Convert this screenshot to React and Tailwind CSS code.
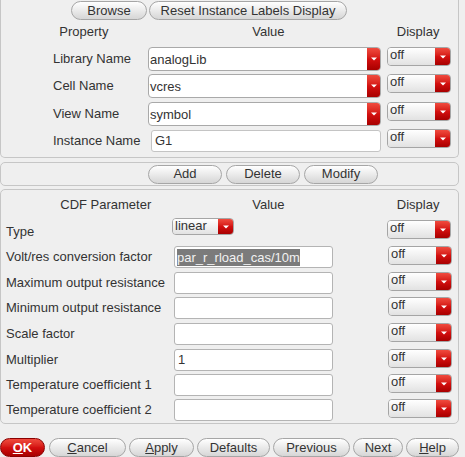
import React from "react"

// small red dropdown cap with a white arrow
const Cap = ({ w = "w-[14px]" }) => (
  <div className={`${w} h-full flex items-center justify-center bg-gradient-to-b from-[#f04a3e] via-[#d41010] to-[#a80000]`}>
    <svg width="6" height="4" viewBox="0 0 6 4">
      <polygon points="0,0.5 6,0.5 3,3.5" fill="#fff" />
    </svg>
  </div>
)

const ValueCombo = ({ value }) => (
  <div className="w-[233px] h-[24px] flex rounded-[4px] border border-[#a9a9a9] overflow-hidden bg-white">
    <div className="flex-1 flex items-center pl-[1px] pt-[1px]">{value}</div>
    <Cap w="w-[13px]" />
  </div>
)

const DisplayCombo = ({ h = "h-[19px]" }) => (
  <div className={`w-[64px] ${h} flex rounded-[4px] border border-[#a5a5a5] overflow-hidden`}>
    <div className="flex-1 bg-gradient-to-b from-white to-[#e2e2e2] pl-[2px] leading-[14px]">off</div>
    <Cap w="w-[15px]" />
  </div>
)

const Button = ({ w, children, className = "" }) => (
  <div
    className={`${w} h-[19px] flex items-center justify-center rounded-full border border-[#a6a6a6] bg-gradient-to-b from-white to-[#d6d6d6] text-[#333] ${className}`}
  >
    {children}
  </div>
)

const Field = ({ children }) => (
  <div className="w-[159px] h-[22px] flex items-center rounded-[3px] border border-[#b4b4b4] bg-white pl-[3px]">
    {children}
  </div>
)

const params = [
  { label: "Volt/res conversion factor", h: "h-[26px]", selected: "par_r_rload_cas/10m" },
  { label: "Maximum output resistance", h: "h-[25px]" },
  { label: "Minimum output resistance", h: "h-[26px]" },
  { label: "Scale factor", h: "h-[26px]" },
  { label: "Multiplier", h: "h-[25px]", value: "1" },
  { label: "Temperature coefficient 1", h: "h-[25px]" },
  { label: "Temperature coefficient 2", h: "h-[24px]" },
]

export default function App() {
  return (
    <div className="w-[465px] h-[457px] overflow-hidden bg-[#efefef] text-[13px] text-[#333] font-['Liberation_Sans',Arial,sans-serif]">
      {/* Property panel */}
      <div className="w-[459px] h-[158px] border border-t-0 border-[#c6c6c6] rounded-b-[5px]">
        <div className="flex gap-[2px] pl-[70px] pt-[1px]">
          <Button w="w-[76px]">Browse</Button>
          <Button w="w-[198px]">Reset Instance Labels Display</Button>
        </div>
        <div className="flex mt-[4px] h-[15px] leading-[15px]">
          <div className="w-[166px] text-center">Property</div>
          <div className="w-[204px] text-center">Value</div>
          <div className="w-[8px]" />
          <div className="w-[80px] text-center">Display</div>
        </div>
        <div className="mt-[8px]">
          {[
            ["Library Name", "analogLib", "h-[27px]"],
            ["Cell Name", "vcres", "h-[28px]"],
            ["View Name", "symbol", "h-[28px]"],
          ].map(([label, value, h]) => (
            <div key={label} className={`flex items-start ${h}`}>
              <div className="w-[147px] h-[24px] pl-[52px] flex items-center">{label}</div>
              <ValueCombo value={value} />
              <div className="ml-[6px]">
                <DisplayCombo />
              </div>
            </div>
          ))}
          <div className="flex items-start">
            <div className="w-[150px] h-[22px] pl-[52px] flex items-center">Instance Name</div>
            <div className="w-[230px] h-[22px] flex items-center rounded-[3px] border border-[#c4c4c4] bg-white pl-[3px]">
              G1
            </div>
            <div className="ml-[6px] -mt-[1px]">
              <DisplayCombo />
            </div>
          </div>
        </div>
      </div>

      {/* Add / Delete / Modify */}
      <div className="w-[459px] h-[24px] mt-[4px] border border-[#c6c6c6] rounded-[5px] flex items-center pl-[147px] gap-[4px]">
        <Button w="w-[74px]">Add</Button>
        <Button w="w-[74px]">Delete</Button>
        <Button w="w-[74px]">Modify</Button>
      </div>

      {/* CDF parameters */}
      <div className="w-[459px] h-[235px] mt-[3px] border border-[#c6c6c6] rounded-[5px]">
        <div className="flex mt-[7px] h-[15px] leading-[15px]">
          <div className="w-[210px] text-center">CDF Parameter</div>
          <div className="w-[116px] text-center">Value</div>
          <div className="w-[52px]" />
          <div className="w-[80px] text-center">Display</div>
        </div>
        <div className="flex items-start mt-[4px] h-[30px]">
          <div className="w-[171px] pl-[5px] mt-[8px] leading-[15px]">Type</div>
          <div className="mt-[2px] w-[62px] h-[17px] flex rounded-[4px] border border-[#a5a5a5] overflow-hidden">
            <div className="flex-1 bg-gradient-to-b from-white to-[#e2e2e2] pl-[2px] leading-[13px]">linear</div>
            <Cap w="w-[15px]" />
          </div>
          <div className="ml-[153px] mt-[4px]">
            <DisplayCombo />
          </div>
        </div>
        {params.map((p) => (
          <div key={p.label} className={`flex items-start ${p.h}`}>
            <div className="w-[173px] h-[22px] pl-[5px] flex items-center">{p.label}</div>
            <Field>
              {p.selected ? (
                <span className="bg-[#7b7b7b] text-[#f2f2f2] leading-[17px] -ml-[1px]">{p.selected}</span>
              ) : (
                p.value
              )}
            </Field>
            <div className="ml-[55px]">
              <DisplayCombo />
            </div>
          </div>
        ))}
      </div>

      {/* dialog buttons */}
      <div className="flex gap-[3px] mt-[14px]">
        <div className="w-[45px] h-[19px] flex items-center justify-center rounded-full border border-[#8a0000] bg-gradient-to-b from-[#f04a3e] via-[#d41010] to-[#a80000] text-white font-bold">
          <span>
            <span className="underline">O</span>K
          </span>
        </div>
        <Button w="w-[77px]" className="ml-[1px]">
          <span>
            <span className="underline">C</span>ancel
          </span>
        </Button>
        <Button w="w-[65px]">
          <span>
            <span className="underline">A</span>pply
          </span>
        </Button>
        <Button w="w-[73px]">Defaults</Button>
        <Button w="w-[77px]">Previous</Button>
        <Button w="w-[50px]">Next</Button>
        <Button w="w-[53px]">
          <span>
            <span className="underline">H</span>elp
          </span>
        </Button>
      </div>
    </div>
  )
}
